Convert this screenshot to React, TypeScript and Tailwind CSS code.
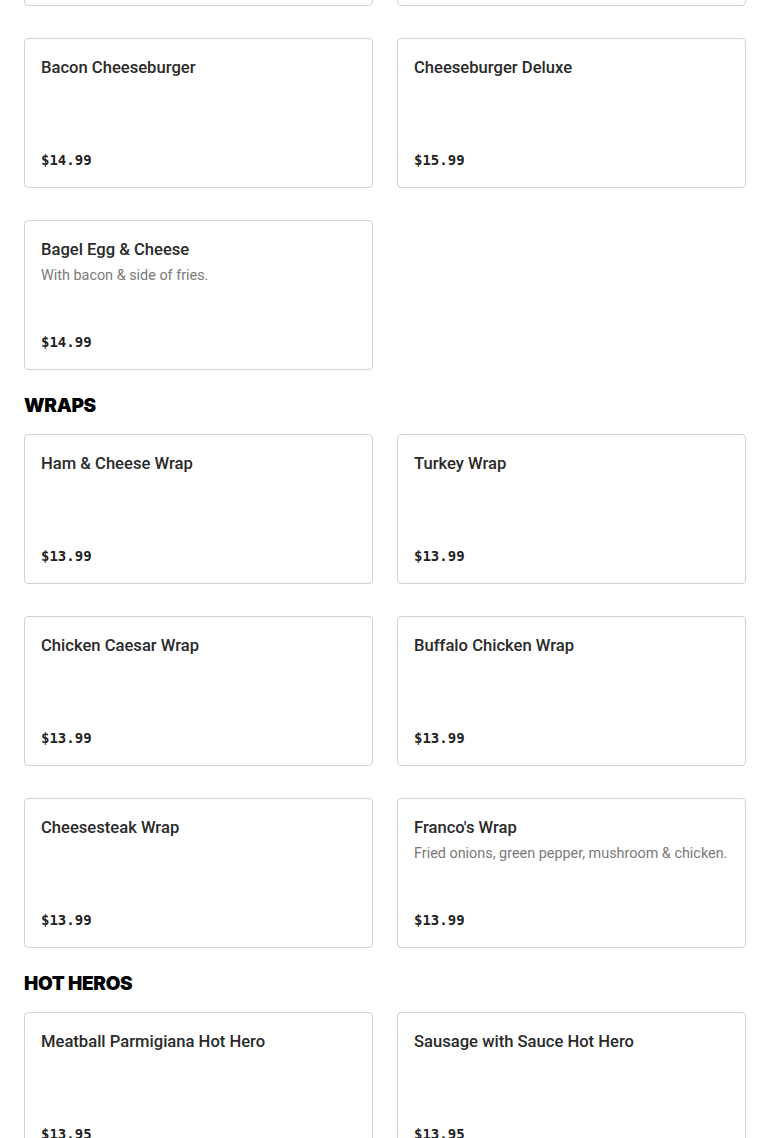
type MenuItem = {
  name: string;
  description?: string;
  price: string;
};

type Section = {
  title?: string;
  items: MenuItem[];
};

const sections: Section[] = [
  {
    items: [
      { name: 'Cheeseburger', price: '$12.99' },
      { name: 'Double Cheeseburger', price: '$16.99' },
      { name: 'Bacon Cheeseburger', price: '$14.99' },
      { name: 'Cheeseburger Deluxe', price: '$15.99' },
      { name: 'Bagel Egg & Cheese', description: 'With bacon & side of fries.', price: '$14.99' },
    ],
  },
  {
    title: 'WRAPS',
    items: [
      { name: 'Ham & Cheese Wrap', price: '$13.99' },
      { name: 'Turkey Wrap', price: '$13.99' },
      { name: 'Chicken Caesar Wrap', price: '$13.99' },
      { name: 'Buffalo Chicken Wrap', price: '$13.99' },
      { name: 'Cheesesteak Wrap', price: '$13.99' },
      {
        name: "Franco's Wrap",
        description: 'Fried onions, green pepper, mushroom & chicken.',
        price: '$13.99',
      },
    ],
  },
  {
    title: 'HOT HEROS',
    items: [
      { name: 'Meatball Parmigiana Hot Hero', price: '$13.95' },
      { name: 'Sausage with Sauce Hot Hero', price: '$13.95' },
    ],
  },
];

function ItemCard({ item }: { item: MenuItem }) {
  return (
    <div className="flex h-[150px] flex-col rounded-[4px] border border-[#d2d2d2] bg-white p-4">
      <h3 className="font-['Roboto',sans-serif] text-[16.6px] font-medium leading-[25px] text-[#2a2a2a]">
        {item.name}
      </h3>
      {item.description && (
        <p className="mt-[3px] font-['Roboto',sans-serif] text-[14.4px] leading-[22px] text-[#7a7a7a]">
          {item.description}
        </p>
      )}
      <span className="mt-auto font-['DejaVu_Sans_Mono',monospace] text-[14px] font-semibold leading-[22px] text-[#222]">
        {item.price}
      </span>
    </div>
  );
}

export default function App() {
  return (
    <div className="h-[1138px] overflow-hidden bg-white font-['Inter',sans-serif]">
      {/* page is scrolled: first row sits mostly above the fold */}
      <div className="-mt-[144px] px-6">
        {sections.map((section, i) => (
          <div key={i}>
            {section.title && (
              <h2 className="mb-[14px] mt-[22px] text-[19px] font-black leading-7 tracking-[-0.3px] text-black">
                {section.title}
              </h2>
            )}
            <div className="grid grid-cols-2 gap-x-6 gap-y-8">
              {section.items.map((item) => (
                <ItemCard key={item.name} item={item} />
              ))}
            </div>
          </div>
        ))}
      </div>
    </div>
  );
}
